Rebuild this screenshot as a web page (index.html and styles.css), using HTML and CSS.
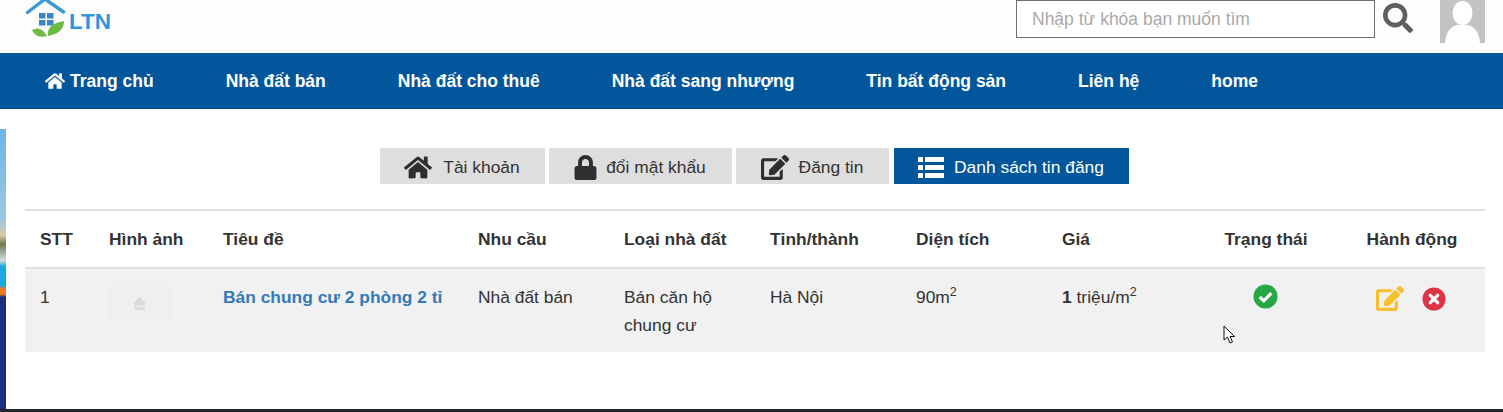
FILE: index.html
```html
<!DOCTYPE html>
<html lang="en">
<head>
  <meta charset="UTF-8" />
  <meta name="viewport" content="width=device-width, initial-scale=1" />
  <title>LTN - Danh sách tin đăng</title>
  <link rel="stylesheet" href="styles.css">
</head>
<body>
  <header class="top-bar">
    <a class="logo" href="#">
      <svg class="logo-mark" viewBox="0 0 44 38" aria-hidden="true">
        <path d="M2.5 12.5 L20 -1 L38.5 12" fill="none" stroke="#3a97d8" stroke-width="3.4" stroke-linecap="round" stroke-linejoin="round"/>
        <rect x="14" y="13" width="6.5" height="5.5" fill="#3a86c4"/>
        <rect x="22" y="13" width="6.5" height="5.5" fill="#3a86c4"/>
        <rect x="14" y="20" width="6.5" height="5.5" fill="#3a86c4"/>
        <rect x="22" y="20" width="6.5" height="5.5" fill="#3a86c4"/>
        <path d="M7 30 Q16 25 22 36 Q11 39 7 30 Z" fill="#6dbb45"/>
        <path d="M23 36 Q21 24 39 21 Q39 33 23 36 Z" fill="#6dbb45"/>
      </svg>
      <span class="logo-text">LTN</span>
    </a>
    <div class="top-tools">
      <input class="search-input" type="text" placeholder="Nhập từ khóa bạn muốn tìm">
      <svg class="search-icon" viewBox="0 0 512 512" aria-hidden="true"><path d="M505 442.7L405.3 343c-4.5-4.5-10.6-7-17-7H372c27.6-35.3 44-79.7 44-128C416 93.1 322.9 0 208 0S0 93.1 0 208s93.1 208 208 208c48.3 0 92.7-16.4 128-44v16.3c0 6.4 2.5 12.5 7 17l99.7 99.7c9.4 9.4 24.6 9.4 33.9 0l28.3-28.3c9.4-9.4 9.4-24.6.1-34zM208 336c-70.7 0-128-57.2-128-128 0-70.7 57.2-128 128-128 70.7 0 128 57.2 128 128 0 70.7-57.2 128-128 128z"/></svg>
      <svg class="avatar" viewBox="0 0 45 43" aria-hidden="true">
        <rect width="45" height="43" fill="#c3c3c3"/>
        <ellipse cx="22.5" cy="13" rx="10" ry="12" fill="#fff"/>
        <path d="M5 43 Q6 28 17 25 L28 25 Q39 28 40 43 Z" fill="#fff"/>
      </svg>
    </div>
  </header>

  <nav class="main-nav">
    <a href="#">
      <svg class="nav-home" viewBox="0 0 576 512" aria-hidden="true"><path d="M280.37 148.26L96 300.11V464a16 16 0 0 0 16 16l112.06-.29a16 16 0 0 0 15.92-16V368a16 16 0 0 1 16-16h64a16 16 0 0 1 16 16v95.64a16 16 0 0 0 16 16.05L464 480a16 16 0 0 0 16-16V300L295.67 148.26a12.19 12.19 0 0 0-15.3 0zM571.6 251.47L488 182.56V44.05a12 12 0 0 0-12-12h-56a12 12 0 0 0-12 12v72.61L318.47 43a48 48 0 0 0-61 0L4.34 251.47a12 12 0 0 0-1.6 16.9l25.5 31A12 12 0 0 0 45.15 301l235.22-193.74a12.19 12.19 0 0 1 15.3 0L530.9 301a12 12 0 0 0 16.9-1.6l25.5-31a12 12 0 0 0-1.7-16.93z"/></svg>
      Trang chủ
    </a>
    <a href="#">Nhà đất bán</a>
    <a href="#">Nhà đất cho thuê</a>
    <a href="#">Nhà đất sang nhượng</a>
    <a href="#">Tin bất động sản</a>
    <a href="#">Liên hệ</a>
    <a href="#">home</a>
  </nav>

  <div class="page">
    <div class="side-banner"></div>
    <main class="content">
      <div class="tabs">
        <a class="tab tab-account" href="#">
          <svg class="tab-icon" viewBox="0 0 576 512" aria-hidden="true"><path d="M280.37 148.26L96 300.11V464a16 16 0 0 0 16 16l112.06-.29a16 16 0 0 0 15.92-16V368a16 16 0 0 1 16-16h64a16 16 0 0 1 16 16v95.64a16 16 0 0 0 16 16.05L464 480a16 16 0 0 0 16-16V300L295.67 148.26a12.19 12.19 0 0 0-15.3 0zM571.6 251.47L488 182.56V44.05a12 12 0 0 0-12-12h-56a12 12 0 0 0-12 12v72.61L318.47 43a48 48 0 0 0-61 0L4.34 251.47a12 12 0 0 0-1.6 16.9l25.5 31A12 12 0 0 0 45.15 301l235.22-193.74a12.19 12.19 0 0 1 15.3 0L530.9 301a12 12 0 0 0 16.9-1.6l25.5-31a12 12 0 0 0-1.7-16.93z"/></svg>
          Tài khoản
        </a>
        <a class="tab tab-password" href="#">
          <svg class="tab-icon" viewBox="0 0 448 512" aria-hidden="true"><path d="M400 224h-24v-72C376 68.2 307.8 0 224 0S72 68.2 72 152v72H48c-26.5 0-48 21.5-48 48v192c0 26.5 21.5 48 48 48h352c26.5 0 48-21.5 48-48V272c0-26.5-21.5-48-48-48zm-104 0H152v-72c0-39.7 32.3-72 72-72s72 32.3 72 72v72z"/></svg>
          đổi mật khẩu
        </a>
        <a class="tab tab-post" href="#">
          <svg class="tab-icon" viewBox="0 0 576 512" aria-hidden="true"><path d="M402.6 83.2l90.2 90.2c3.8 3.8 3.8 10 0 13.8L274.4 405.6l-92.8 10.3c-12.4 1.4-22.9-9.1-21.5-21.5l10.3-92.8L388.8 83.2c3.8-3.8 10-3.8 13.8 0zm162-22.9l-48.8-48.8c-15.2-15.2-39.9-15.2-55.2 0l-35.4 35.4c-3.8 3.8-3.8 10 0 13.8l90.2 90.2c3.8 3.8 10 3.8 13.8 0l35.4-35.4c15.2-15.3 15.2-40 0-55.2zM384 346.2V448H64V128h229.8c3.2 0 6.2-1.3 8.5-3.5l40-40c7.6-7.6 2.2-20.5-8.5-20.5H48C21.5 64 0 85.5 0 112v352c0 26.5 21.5 48 48 48h352c26.5 0 48-21.5 48-48V306.2c0-10.7-12.9-16-20.5-8.5l-40 40c-2.2 2.3-3.5 5.3-3.5 8.5z"/></svg>
          Đăng tin
        </a>
        <a class="tab tab-list active" href="#">
          <svg class="tab-icon" viewBox="0 0 26 22" aria-hidden="true">
            <rect x="0" y="1" width="5" height="5"/><rect x="7" y="1" width="19" height="5"/>
            <rect x="0" y="9" width="5" height="5"/><rect x="7" y="9" width="19" height="5"/>
            <rect x="0" y="17" width="5" height="5"/><rect x="7" y="17" width="19" height="5"/>
          </svg>
          Danh sách tin đăng
        </a>
      </div>

      <table class="post-table">
        <thead>
          <tr>
            <th class="col-stt">STT</th>
            <th class="col-img">Hình ảnh</th>
            <th class="col-title">Tiêu đề</th>
            <th class="col-std">Nhu cầu</th>
            <th class="col-std">Loại nhà đất</th>
            <th class="col-std">Tỉnh/thành</th>
            <th class="col-std">Diện tích</th>
            <th class="col-std">Giá</th>
            <th class="col-std center">Trạng thái</th>
            <th class="center">Hành động</th>
          </tr>
        </thead>
        <tbody>
          <tr>
            <td>1</td>
            <td>
              <div class="thumb">
                <svg viewBox="0 0 14 14" aria-hidden="true"><path d="M0 7 L7 0 L14 7 L12.5 7 V14 H1.5 V7 Z" fill="#dadada"/><rect x="3" y="9" width="8" height="1.5" fill="#f0f0f0"/></svg>
              </div>
            </td>
            <td><a class="post-link" href="#">Bán chung cư 2 phòng 2 tỉ</a></td>
            <td>Nhà đất bán</td>
            <td>Bán căn hộ chung cư</td>
            <td>Hà Nội</td>
            <td>90m<sup>2</sup></td>
            <td><b>1</b> triệu/m<sup>2</sup></td>
            <td class="center">
              <svg class="status-icon" viewBox="0 0 26 26" aria-hidden="true">
                <circle cx="13" cy="13" r="12.5" fill="#28a745"/>
                <path d="M7 13.5 L11.2 17.5 L19 9.5" fill="none" stroke="#fff" stroke-width="3.4"/>
              </svg>
            </td>
            <td class="center">
              <div class="actions">
                <svg class="edit-icon" viewBox="0 0 576 512" aria-hidden="true"><path d="M402.6 83.2l90.2 90.2c3.8 3.8 3.8 10 0 13.8L274.4 405.6l-92.8 10.3c-12.4 1.4-22.9-9.1-21.5-21.5l10.3-92.8L388.8 83.2c3.8-3.8 10-3.8 13.8 0zm162-22.9l-48.8-48.8c-15.2-15.2-39.9-15.2-55.2 0l-35.4 35.4c-3.8 3.8-3.8 10 0 13.8l90.2 90.2c3.8 3.8 10 3.8 13.8 0l35.4-35.4c15.2-15.3 15.2-40 0-55.2zM384 346.2V448H64V128h229.8c3.2 0 6.2-1.3 8.5-3.5l40-40c7.6-7.6 2.2-20.5-8.5-20.5H48C21.5 64 0 85.5 0 112v352c0 26.5 21.5 48 48 48h352c26.5 0 48-21.5 48-48V306.2c0-10.7-12.9-16-20.5-8.5l-40 40c-2.2 2.3-3.5 5.3-3.5 8.5z"/></svg>
                <svg class="delete-icon" viewBox="0 0 26 26" aria-hidden="true">
                  <circle cx="13" cy="13" r="12.5" fill="#dc3545"/>
                  <path d="M9 9 L17 17 M17 9 L9 17" fill="none" stroke="#fff" stroke-width="3.6" stroke-linecap="round"/>
                </svg>
              </div>
            </td>
          </tr>
        </tbody>
      </table>
    </main>
  </div>

  <footer class="bottom-bar"></footer>

  <svg class="cursor" viewBox="0 0 13 20" aria-hidden="true"><path d="M1 1 V15 L4.5 12 L7 18 L9.5 17 L7 11.5 L11.5 11.5 Z" fill="#fff" stroke="#111" stroke-width="1"/></svg>
</body>
</html>
```

FILE: styles.css
```css
* {
  margin: 0;
  padding: 0;
  box-sizing: border-box;
}

html,
body {
  height: 412px;
  overflow: hidden;
}

body {
  position: relative;
  font-family: 'Liberation Sans', Arial, sans-serif;
  font-size: 17.4px;
  color: #333;
  background: #fff;
}

a {
  text-decoration: none;
  color: inherit;
}

.top-bar {
  height: 53px;
  display: flex;
  justify-content: space-between;
  background: #fdfdfd;
  overflow: hidden;
}

.logo {
  display: flex;
  align-items: flex-start;
  padding-left: 25px;
}

.logo-mark {
  width: 44px;
  height: 38px;
}

.logo-text {
  margin: 10px 0 0 0;
  font-size: 22.5px;
  line-height: 24px;
  font-weight: 700;
  color: #2f96dc;
}

.top-tools {
  display: flex;
  align-items: flex-start;
  padding-right: 18px;
}

.search-input {
  width: 359px;
  height: 38px;
  padding: 0 15px;
  border: 1px solid #6f6f6f;
  background: #fff;
  font-family: inherit;
  font-size: 17.5px;
  outline: none;
}

.search-input::placeholder {
  color: #a9a9a9;
}

.search-icon {
  width: 30px;
  height: 30px;
  margin: 3px 0 0 8px;
  fill: #5f5f5f;
}

.avatar {
  width: 45px;
  height: 43px;
  margin-left: 27px;
}

.main-nav {
  height: 56px;
  display: flex;
  align-items: center;
  padding: 1px 0 0 9px;
  background: #02569c;
  border-bottom: 1px solid #024a87;
}

.main-nav a {
  display: flex;
  align-items: center;
  padding: 0 36px;
  font-size: 17.5px;
  font-weight: 700;
  color: #fff;
  white-space: nowrap;
}

.nav-home {
  width: 20px;
  height: 18px;
  margin-right: 5px;
  fill: #fff;
}

.page {
  height: 280px;
  margin-top: 20px;
  display: flex;
}

.side-banner {
  width: 6px;
  background: linear-gradient(180deg, #6db4e6 0, #9cc8e2 32%, #d9c9a8 38%, #6d7a50 41%, #cfdde0 47%, #1ba7df 49%, #1ba7df 56%, #ef7a22 57%, #ef7a22 59%, #1c2f7c 60%, #1c2f7c 100%);
}

.content {
  flex: 1;
  padding: 19px 18px 0 19px;
}

.tabs {
  display: flex;
  justify-content: center;
  gap: 4px;
  height: 36px;
  padding-right: 2px;
  margin-bottom: 25px;
}

.tab {
  display: flex;
  align-items: center;
  justify-content: center;
  gap: 10px;
  padding-top: 2px;
  background: #dedede;
  color: #333;
}

.tab-account { width: 165px; gap: 11px; }
.tab-password { width: 183px; gap: 9px; }
.tab-post { width: 153px; }
.tab-list { width: 235px; margin-left: 1px; }

.tab-icon {
  width: 28px;
  height: 25px;
  fill: #2f2f2f;
}

.tab-password .tab-icon {
  width: 23px;
}

.tab.active {
  background: #02569c;
  color: #fff;
}

.tab.active .tab-icon {
  width: 26px;
  height: 22px;
  fill: #fff;
}

.post-table {
  width: 1460px;
  border-collapse: collapse;
  table-layout: fixed;
  border-top: 2px solid #e0e0e0;
}

.col-stt { width: 69px; }
.col-img { width: 114px; }
.col-title { width: 255px; }
.col-std { width: 146px; }

.post-table th {
  height: 58px;
  padding: 0 15px;
  text-align: left;
  font-weight: 700;
  color: #333;
  border-bottom: 2px solid #e0e0e0;
  white-space: nowrap;
}

.post-table td {
  padding: 14px 15px 13px;
  vertical-align: top;
  line-height: 28px;
  background: #f1f1f1;
}

.post-table th.center {
  text-align: center;
}

.post-table td.center {
  padding-left: 14px;
  padding-right: 16px;
  text-align: center;
}

.post-table sup {
  font-size: 12.5px;
  line-height: 0;
}

.thumb {
  width: 65px;
  height: 35px;
  margin: 3px 0 0 -2px;
  display: flex;
  align-items: center;
  justify-content: center;
  background: #efefef;
}

.thumb svg {
  width: 13px;
  height: 13px;
}

.post-link {
  font-weight: 700;
  color: #337ab7;
  white-space: nowrap;
}

.status-icon {
  display: block;
  width: 25px;
  height: 25px;
  margin: 1px auto 0;
}

.actions {
  display: flex;
  justify-content: center;
  align-items: center;
  gap: 18px;
  margin-top: 3px;
}

.edit-icon {
  width: 28px;
  height: 25px;
  fill: #f6c02c;
}

.delete-icon {
  width: 24px;
  height: 24px;
}

.bottom-bar {
  height: 3px;
  background: #23272b;
}

/* the mouse pointer caught in the screenshot */
.cursor {
  position: absolute;
  left: 1223px;
  top: 325px;
  width: 13px;
  height: 20px;
}
```
